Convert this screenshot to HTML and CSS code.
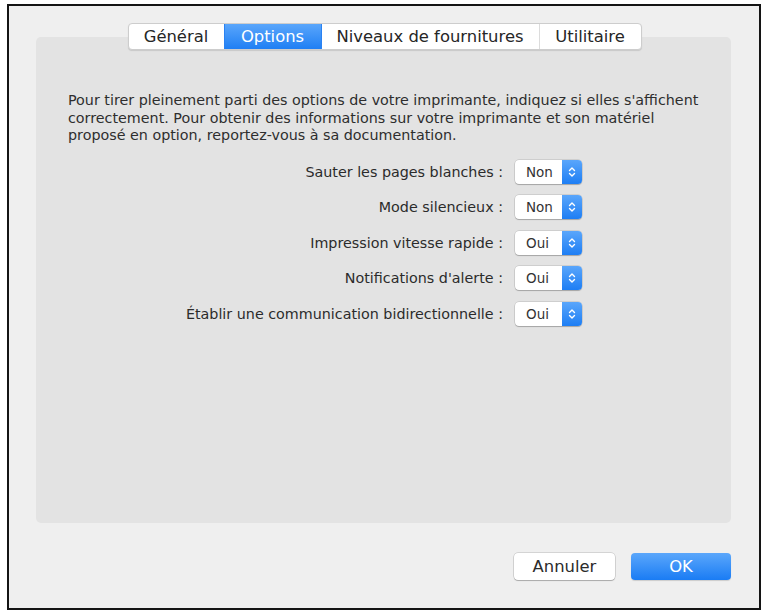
FILE: index.html
```html
<!DOCTYPE html>
<html lang="fr">
<head>
<meta charset="utf-8">
<title>Options</title>
<link rel="stylesheet" href="styles.css">
</head>
<body>
<div class="frame">
  <div class="tabs">
    <div class="tab t1">Général</div>
    <div class="tab t2 active">Options</div>
    <div class="tab t3">Niveaux de fournitures</div>
    <div class="tab t4">Utilitaire</div>
  </div>
  <div class="panel">
    <p class="intro">Pour tirer pleinement parti des options de votre imprimante, indiquez si elles s'affichent<br>correctement. Pour obtenir des informations sur votre imprimante et son matériel<br>proposé en option, reportez-vous à sa documentation.</p>
    <div class="rows">
      <div class="label">Sauter les pages blanches :</div>
      <div class="popup"><span class="val">Non</span><span class="arrows"><svg width="8" height="12" viewBox="0 0 8 12"><path d="M1.5 4.5 L4 2 L6.5 4.5 M1.5 7.5 L4 10 L6.5 7.5" fill="none" stroke="#fff" stroke-width="1.4" stroke-linecap="round" stroke-linejoin="round"/></svg></span></div>
      <div class="label">Mode silencieux :</div>
      <div class="popup"><span class="val">Non</span><span class="arrows"><svg width="8" height="12" viewBox="0 0 8 12"><path d="M1.5 4.5 L4 2 L6.5 4.5 M1.5 7.5 L4 10 L6.5 7.5" fill="none" stroke="#fff" stroke-width="1.4" stroke-linecap="round" stroke-linejoin="round"/></svg></span></div>
      <div class="label">Impression vitesse rapide :</div>
      <div class="popup"><span class="val">Oui</span><span class="arrows"><svg width="8" height="12" viewBox="0 0 8 12"><path d="M1.5 4.5 L4 2 L6.5 4.5 M1.5 7.5 L4 10 L6.5 7.5" fill="none" stroke="#fff" stroke-width="1.4" stroke-linecap="round" stroke-linejoin="round"/></svg></span></div>
      <div class="label">Notifications d'alerte :</div>
      <div class="popup"><span class="val">Oui</span><span class="arrows"><svg width="8" height="12" viewBox="0 0 8 12"><path d="M1.5 4.5 L4 2 L6.5 4.5 M1.5 7.5 L4 10 L6.5 7.5" fill="none" stroke="#fff" stroke-width="1.4" stroke-linecap="round" stroke-linejoin="round"/></svg></span></div>
      <div class="label">Établir une communication bidirectionnelle :</div>
      <div class="popup"><span class="val">Oui</span><span class="arrows"><svg width="8" height="12" viewBox="0 0 8 12"><path d="M1.5 4.5 L4 2 L6.5 4.5 M1.5 7.5 L4 10 L6.5 7.5" fill="none" stroke="#fff" stroke-width="1.4" stroke-linecap="round" stroke-linejoin="round"/></svg></span></div>
    </div>
  </div>
  <div class="buttons">
    <div class="btn cancel">Annuler</div>
    <div class="btn ok">OK</div>
  </div>
</div>
</body>
</html>
```
FILE: styles.css
```css
html, body {
  margin: 0;
  padding: 0;
  background: #ffffff;
}
body {
  font-family: "DejaVu Sans", "Liberation Sans", sans-serif;
  color: #2b2b2b;
}
.frame {
  box-sizing: border-box;
  margin: 4px 0 0 7px;
  width: 754px;
  height: 606px;
  border: 2px solid #141414;
  background: #efefef;
  padding: 17px 28px 0 27px;
  display: flex;
  flex-direction: column;
}
.tabs {
  align-self: center;
  position: relative;
  z-index: 1;
  display: flex;
  height: 27px;
  box-sizing: border-box;
  background: #ffffff;
  border: 1px solid #cdcdcd;
  border-radius: 4px;
  box-shadow: 0 1px 1px rgba(0,0,0,0.12);
  overflow: hidden;
  margin-left: 2px;
}
.tab {
  display: flex;
  align-items: center;
  justify-content: center;
  font-size: 16.4px;
  color: #262626;
  border-left: 1px solid #dcdcdc;
  box-sizing: border-box;
}
.tab:first-child { border-left: none; }
.t1 { width: 95px; }
.t2 { width: 97px; }
.t3 { width: 218px; }
.t4 { width: 102px; }
.tab.active {
  background: linear-gradient(#5aa6fb, #1f7ff4);
  color: #ffffff;
  border-left-color: #2a82f2;
}
.tab.active + .tab { border-left-color: #2a82f2; }
.panel {
  margin-top: -13px;
  height: 486px;
  box-sizing: border-box;
  background: #e3e3e3;
  border-radius: 5px;
  padding: 55px 20px 0 32px;
}
.intro {
  margin: 0;
  font-size: 14.3px;
  line-height: 17.5px;
  color: #2e2e2e;
  white-space: nowrap;
}
.rows {
  margin-top: 15px;
  display: grid;
  grid-template-columns: 435px 67px;
  column-gap: 12px;
  row-gap: 11.5px;
  align-items: center;
}
.label {
  text-align: right;
  font-size: 14.3px;
  color: #2b2b2b;
}
.popup {
  display: flex;
  height: 24px;
  box-sizing: border-box;
  background: #ffffff;
  border-radius: 4px;
  box-shadow: 0 0 0 0.5px rgba(0,0,0,0.18), 0 1px 1px rgba(0,0,0,0.2);
  overflow: hidden;
}
.val {
  flex: 1;
  display: flex;
  align-items: center;
  padding-left: 11px;
  font-size: 13.5px;
  color: #333;
}
.arrows {
  width: 20px;
  display: flex;
  align-items: center;
  justify-content: center;
  background: linear-gradient(#5aa6fb, #1e7ef4);
}
.buttons {
  margin-top: 30px;
  display: flex;
  justify-content: flex-end;
  gap: 16px;
}
.btn {
  height: 27px;
  box-sizing: border-box;
  border-radius: 4px;
  display: flex;
  align-items: center;
  justify-content: center;
  font-size: 16.4px;
}
.cancel {
  width: 101px;
  background: #ffffff;
  color: #2b2b2b;
  box-shadow: 0 0 0 0.5px rgba(0,0,0,0.22), 0 1px 1px rgba(0,0,0,0.2);
}
.ok {
  width: 100px;
  background: linear-gradient(#5ba7fb, #1a7cf4);
  color: #ffffff;
  box-shadow: 0 1px 1px rgba(0,0,0,0.15);
}
```
